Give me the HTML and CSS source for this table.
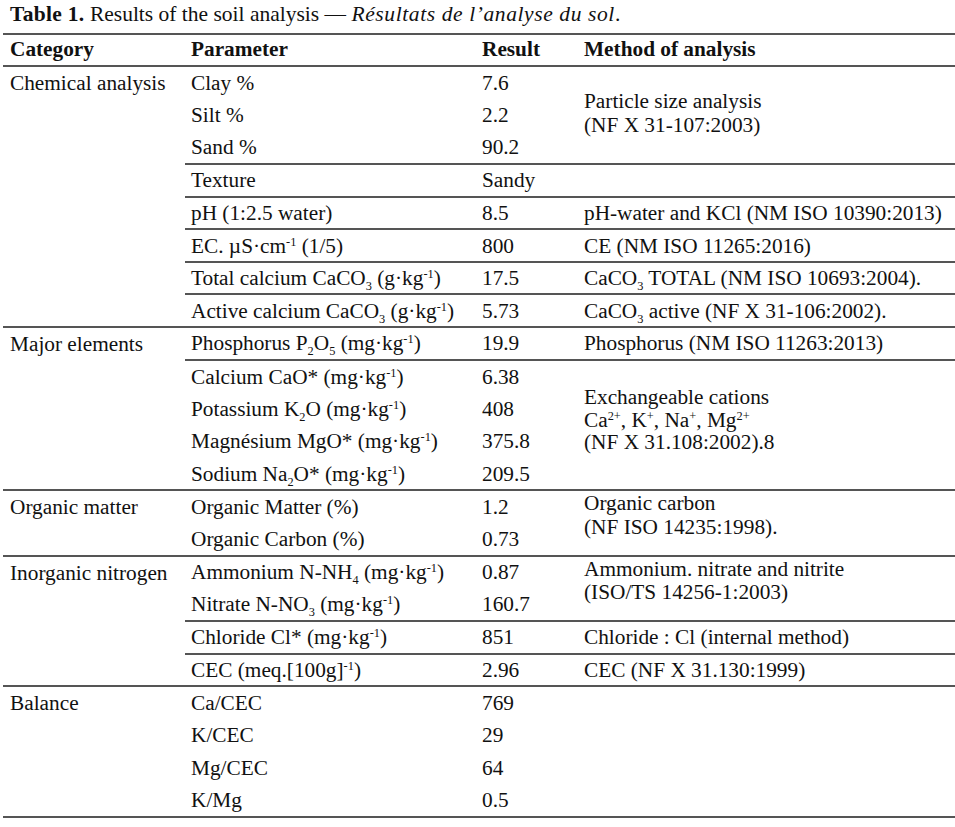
FILE: index.html
```html
<!DOCTYPE html>
<html>
<head>
<meta charset="utf-8">
<link rel="stylesheet" href="styles.css">
</head>
<body>
<div class="caption"><b>Table 1.</b> Results of the soil analysis — <i class="fr">Résultats de l’analyse du sol</i>.</div>
<table class="soil">
  <colgroup>
    <col class="c1"><col class="c2"><col class="c3"><col class="c4">
  </colgroup>
  <thead>
    <tr class="head">
      <th>Category</th><th>Parameter</th><th>Result</th><th>Method of analysis</th>
    </tr>
  </thead>
  <tbody>
    <tr class="sep">
      <td rowspan="8" class="cat">Chemical analysis</td>
      <td>Clay %</td><td>7.6</td>
      <td rowspan="3" class="m-particle">Particle size analysis<br>(NF X 31-107:2003)</td>
    </tr>
    <tr><td>Silt %</td><td>2.2</td></tr>
    <tr><td>Sand %</td><td>90.2</td></tr>
    <tr class="inner"><td>Texture</td><td>Sandy</td><td></td></tr>
    <tr class="inner"><td>pH (1:2.5 water)</td><td>8.5</td><td>pH-water and KCl (NM ISO 10390:2013)</td></tr>
    <tr class="inner"><td>EC. µS·cm<sup>-1</sup> (1/5)</td><td>800</td><td>CE (NM ISO 11265:2016)</td></tr>
    <tr class="inner"><td>Total calcium CaCO<sub>3</sub> (g·kg<sup>-1</sup>)</td><td>17.5</td><td>CaCO<sub>3</sub> TOTAL (NM ISO 10693:2004).</td></tr>
    <tr class="inner"><td>Active calcium CaCO<sub>3</sub> (g·kg<sup>-1</sup>)</td><td>5.73</td><td>CaCO<sub>3</sub> active (NF X 31-106:2002).</td></tr>

    <tr class="sep">
      <td rowspan="5" class="cat">Major elements</td>
      <td>Phosphorus P<sub>2</sub>O<sub>5</sub> (mg·kg<sup>-1</sup>)</td><td>19.9</td><td>Phosphorus (NM ISO 11263:2013)</td>
    </tr>
    <tr class="inner">
      <td>Calcium CaO* (mg·kg<sup>-1</sup>)</td><td>6.38</td>
      <td rowspan="4" class="m-cations">Exchangeable cations<br>Ca<sup>2+</sup>, K<sup>+</sup>, Na<sup>+</sup>, Mg<sup>2+</sup><br>(NF X 31.108:2002).8</td>
    </tr>
    <tr><td>Potassium K<sub>2</sub>O (mg·kg<sup>-1</sup>)</td><td>408</td></tr>
    <tr><td>Magnésium MgO* (mg·kg<sup>-1</sup>)</td><td>375.8</td></tr>
    <tr><td>Sodium Na<sub>2</sub>O* (mg·kg<sup>-1</sup>)</td><td>209.5</td></tr>

    <tr class="sep">
      <td rowspan="2" class="cat">Organic matter</td>
      <td>Organic Matter (%)</td><td>1.2</td>
      <td rowspan="2" class="m-top">Organic carbon<br>(NF ISO 14235:1998).</td>
    </tr>
    <tr><td>Organic Carbon (%)</td><td>0.73</td></tr>

    <tr class="sep">
      <td rowspan="4" class="cat">Inorganic nitrogen</td>
      <td>Ammonium N-NH<sub>4</sub> (mg·kg<sup>-1</sup>)</td><td>0.87</td>
      <td rowspan="2" class="m-top">Ammonium. nitrate and nitrite<br>(ISO/TS 14256-1:2003)</td>
    </tr>
    <tr><td>Nitrate N-NO<sub>3</sub> (mg·kg<sup>-1</sup>)</td><td>160.7</td></tr>
    <tr class="inner"><td>Chloride Cl* (mg·kg<sup>-1</sup>)</td><td>851</td><td>Chloride : Cl (internal method)</td></tr>
    <tr class="inner"><td>CEC (meq.[100g]<sup>-1</sup>)</td><td>2.96</td><td>CEC (NF X 31.130:1999)</td></tr>

    <tr class="sep">
      <td rowspan="4" class="cat">Balance</td>
      <td>Ca/CEC</td><td>769</td><td rowspan="4"></td>
    </tr>
    <tr><td>K/CEC</td><td>29</td></tr>
    <tr><td>Mg/CEC</td><td>64</td></tr>
    <tr class="last"><td>K/Mg</td><td>0.5</td></tr>
  </tbody>
</table>
</body>
</html>
```
FILE: styles.css
```css
html, body {
  margin: 0;
  padding: 0;
  background: #fff;
}
body {
  font-family: "Liberation Serif", "Times New Roman", serif;
  color: #111;
  width: 955px;
}
.caption {
  height: 33px;
  box-sizing: border-box;
  padding: 2px 0 0 10px;
  font-size: 21.5px;
  line-height: 24px;
  white-space: nowrap;
}
.caption b {
  letter-spacing: 0.3px;
}
.caption .fr {
  letter-spacing: 0.6px;
}
.soil {
  margin-left: 3px;
  width: 952px;
  border-collapse: collapse;
  table-layout: fixed;
  font-size: 21.3px;
  border-bottom: 2px solid #555;
}
.c1 { width: 182px; }
.c2 { width: 291px; }
.c3 { width: 102px; }
.c4 { width: 377px; }
.soil th, .soil td {
  padding: 0 0 0 6px;
  text-align: left;
  vertical-align: middle;
  white-space: nowrap;
  line-height: 22px;
}
.soil th {
  padding-bottom: 3px;
}
.soil th:first-child, .soil td.cat {
  padding-left: 7px;
}
.soil td.cat {
  vertical-align: top;
  padding-top: 5px;
}
.head {
  height: 32px;
  border-top: 2px solid #555;
  border-bottom: 2px solid #555;
}
.head th {
  font-weight: bold;
}
.soil tbody tr {
  height: 32.65px;
}
.soil tr.sep td {
  border-top: 2px solid #555;
}
.soil tr.inner td {
  border-top: 2px solid #555;
}
.m-particle {
  line-height: 24px !important;
  padding-bottom: 4px !important;
}
.m-cations {
  line-height: 22.5px !important;
  padding-bottom: 10px !important;
}
.m-top {
  vertical-align: top !important;
  line-height: 23.5px !important;
  padding-top: 1px !important;
}
sub, sup {
  font-size: 0.58em;
  line-height: 0;
}
sub {
  vertical-align: -0.4em;
}
sup {
  vertical-align: 0.55em;
}
```
